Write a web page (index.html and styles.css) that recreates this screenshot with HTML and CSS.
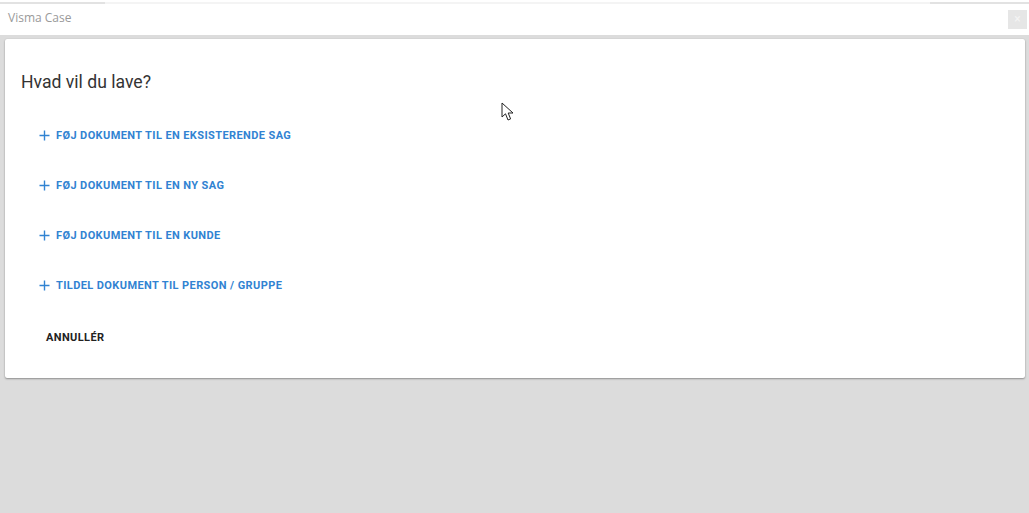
FILE: index.html
```html
<!DOCTYPE html>
<html lang="da">
<head>
<meta charset="utf-8">
<title>Visma Case</title>
<link rel="stylesheet" href="styles.css">
</head>
<body>
<div class="app">
  <header class="titlebar">
    <div class="topline"><span class="seg-a"></span><span class="seg-b"></span><span class="seg-c"></span></div>
    <div class="titlerow">
      <span class="apptitle">Visma Case</span>
      <span class="close">×</span>
    </div>
  </header>
  <main class="content">
    <section class="card">
      <h1 class="heading">Hvad vil du lave?</h1>
      <ul class="actions">
        <li><button class="action"><svg class="plus" width="11" height="11" viewBox="0 0 11 11"><path d="M5.5 0.5V10.5M0.5 5.5H10.5" stroke="currentColor" stroke-width="1.4"/></svg>FØJ DOKUMENT TIL EN EKSISTERENDE SAG</button></li>
        <li><button class="action"><svg class="plus" width="11" height="11" viewBox="0 0 11 11"><path d="M5.5 0.5V10.5M0.5 5.5H10.5" stroke="currentColor" stroke-width="1.4"/></svg>FØJ DOKUMENT TIL EN NY SAG</button></li>
        <li><button class="action"><svg class="plus" width="11" height="11" viewBox="0 0 11 11"><path d="M5.5 0.5V10.5M0.5 5.5H10.5" stroke="currentColor" stroke-width="1.4"/></svg>FØJ DOKUMENT TIL EN KUNDE</button></li>
        <li><button class="action"><svg class="plus" width="11" height="11" viewBox="0 0 11 11"><path d="M5.5 0.5V10.5M0.5 5.5H10.5" stroke="currentColor" stroke-width="1.4"/></svg>TILDEL DOKUMENT TIL PERSON / GRUPPE</button></li>
      </ul>
      <button class="cancel">ANNULLÉR</button>
    </section>
  </main>
  <svg class="cursor" width="14" height="20" viewBox="0 0 14 20"><path d="M1 1 L1 15 L4.5 11.8 L7 18 L9.6 16.9 L7.2 11 L12 11 Z" fill="#fff" stroke="#222" stroke-width="1" stroke-linejoin="round"/></svg>
</div>
</body>
</html>
```
FILE: styles.css
```css
* { box-sizing: border-box; }
html, body { margin: 0; padding: 0; }
body {
  width: 1029px;
  height: 513px;
  background: #dcdcdc;
  font-family: Roboto, "Noto Sans", "Liberation Sans", sans-serif;
  overflow: hidden;
}
.app { position: relative; height: 513px; display: flex; flex-direction: column; }
.titlebar { background: #fff; height: 35px; display: flex; flex-direction: column; }
.topline { display: flex; height: 4px; padding-top: 2px; }
.topline span { height: 2px; display: block; }
.seg-a { width: 105px; background: #e2e2e2; }
.seg-b { width: 825px; background: #f4f4f4; }
.seg-c { flex: 1; background: #e2e2e2; }
.titlerow {
  flex: 1;
  display: flex;
  align-items: center;
  justify-content: space-between;
  padding: 0 2px 6px 8px;
}
.apptitle {
  font-family: "Segoe UI", "Open Sans", "Noto Sans", sans-serif;
  font-size: 12px;
  color: #9a9a9a;
  padding-top: 2px;
}
.close {
  width: 19px;
  height: 19px;
  background: #e6e6e6;
  color: #f4f4f4;
  font-size: 12px;
  line-height: 19px;
  text-align: center;
  margin-top: 6px;
}
.content { padding: 4px 4px 0 5px; }
.card {
  background: #fff;
  border-radius: 2px;
  box-shadow: 0 1px 2px rgba(0,0,0,0.35), 0 0 1px rgba(0,0,0,0.15);
  height: 339px;
  padding: 32px 0 0 16px;
}
.heading {
  margin: 0;
  font-size: 17.6px;
  font-weight: 400;
  color: #333;
  line-height: 22px;
}
.actions { list-style: none; margin: 29px 0 0 0; padding: 0 0 0 18px; display: flex; flex-direction: column; gap: 22px; }
.action, .cancel {
  background: none;
  border: 0;
  padding: 0;
  font-family: Roboto, "Liberation Sans", sans-serif;
  font-weight: 700;
  font-size: 11px;
  letter-spacing: 0.4px;
  cursor: pointer;
  line-height: 28px;
  height: 28px;
  display: flex;
  align-items: center;
}
.action { color: #3183d2; }
.plus {
  width: 11px;
  height: 11px;
  margin-right: 6px;
  margin-top: -2px;
  flex: none;
}
.cancel { color: #222; margin: 24px 0 0 25px; }
.cursor { position: absolute; left: 501px; top: 102px; }
```
